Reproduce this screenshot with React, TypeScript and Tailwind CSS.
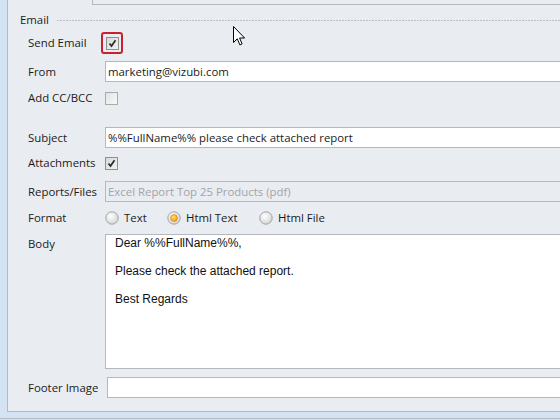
import React from 'react';

const Check = ({ checked }: { checked?: boolean }) => (
  <span
    className={
      checked
        ? 'w-[13px] h-[13px] border border-[#8e8f91] bg-linear-to-br from-[#d9d9d9] to-[#f2f2f2] flex items-center justify-center'
        : 'w-[13px] h-[13px] border border-[#a9abae] bg-linear-to-br from-[#e2e2e2] to-[#fafafa] flex items-center justify-center'
    }
  >
    {checked && (
      <svg width="11" height="11" viewBox="0 0 11 11">
        <path d="M2.5 5.5 L4.5 8 L8.5 2.2" fill="none" stroke="#2b2b2b" strokeWidth="1.7" />
      </svg>
    )}
  </span>
);

const Radio = ({ selected, label }: { selected?: boolean; label: string }) => (
  <span className="flex items-center gap-[5px]">
    <svg width="14" height="14" viewBox="0 0 14 14">
      <defs>
        <radialGradient id="rgray" cx="0.4" cy="0.35" r="0.75">
          <stop offset="0" stopColor="#ffffff" />
          <stop offset="1" stopColor="#cfcfcf" />
        </radialGradient>
        <radialGradient id="rorange" cx="0.4" cy="0.35" r="0.7">
          <stop offset="0" stopColor="#ffe27a" />
          <stop offset="1" stopColor="#f29a10" />
        </radialGradient>
      </defs>
      <circle cx="7" cy="7" r="6.2" fill="url(#rgray)" stroke="#9c9c9c" strokeWidth="0.9" />
      {selected && <circle cx="7" cy="7" r="3.4" fill="url(#rorange)" stroke="#e08400" strokeWidth="0.7" />}
    </svg>
    <span>{label}</span>
  </span>
);

const Row = ({
  label,
  className,
  top,
  children,
}: {
  label: string;
  className: string;
  top?: boolean;
  children: React.ReactNode;
}) => (
  <div className={`flex pl-[20px] ${top ? 'items-start' : 'items-center'} ${className}`}>
    <span className={`w-[77px] shrink-0 ${top ? 'pt-[2px]' : ''}`}>{label}</span>
    {children}
  </div>
);

const field = 'flex-1 h-full border border-[#b5b8be] flex items-center pl-[2px]';

const App = () => {
  return (
    <div className="w-[560px] h-[420px] overflow-hidden bg-[#d4e3f3] flex flex-col font-['Segoe_UI','Open_Sans',sans-serif] text-[11.4px] leading-[16px] text-[#1b1b1b]">
      <div className="relative ml-[7px] w-[660px] h-[412px] shrink-0 border-l border-b border-[#b3b8c1] bg-[#e9ecf1]">
        <div className="ml-[84px] h-[5px] border-l border-b border-[#b3b8c1]" />

        <div className="mt-[7px] ml-[12px] h-[16px] flex items-center">
          <span>Email</span>
          <div className="ml-[8px] flex-1 h-px bg-[repeating-linear-gradient(90deg,#b9bdc5_0_2px,transparent_2px_3px)]" />
        </div>

        <Row label="Send Email" className="mt-[4px] h-[22px]">
          <span className="-ml-[4px] w-[22px] h-[22px] border-2 border-[#c8232d] rounded-[3px] flex items-center justify-center">
            <Check checked />
          </span>
        </Row>

        <Row label="From" className="mt-[7px] h-[21px]">
          <div className={`${field} bg-white`}>marketing@vizubi.com</div>
        </Row>

        <Row label="Add CC/BCC" className="mt-[6px] h-[20px]">
          <Check />
        </Row>

        <Row label="Subject" className="mt-[19px] h-[21px]">
          <div className={`${field} bg-white`}>%%FullName%% please check attached report</div>
        </Row>

        <Row label="Attachments" className="mt-[5px] h-[20px]">
          <Check checked />
        </Row>

        <Row label="Reports/Files" className="mt-[8px] h-[21px]">
          <div className={`${field} text-[#a3a5a9]`}>Excel Report Top 25 Products (pdf)</div>
        </Row>

        <Row label="Format" className="mt-[7px] h-[18px]">
          <div className="flex items-center">
            <span className="w-[62px]">
              <Radio label="Text" />
            </span>
            <span className="w-[92px]">
              <Radio selected label="Html Text" />
            </span>
            <Radio label="Html File" />
          </div>
        </Row>

        <Row label="Body" top className="mt-[7px] h-[135px]">
          <div className="flex-1 h-full border border-[#b5b8be] bg-white pl-[9px] pt-px font-['Liberation_Sans',Arial,sans-serif] text-[12px] leading-[14px] text-[#111]">
            <div>Dear %%FullName%%,</div>
            <div className="h-[14px]" />
            <div>Please check the attached report.</div>
            <div className="h-[14px]" />
            <div>Best Regards</div>
          </div>
        </Row>

        <Row label="Footer Image" className="mt-[8px] h-[21px]">
          <div className={`${field} ml-[2px] bg-white`} />
        </Row>

        <svg className="absolute left-[225px] top-[26px]" width="13" height="20" viewBox="0 0 13 20">
          <path
            d="M0.5 0.5 L0.5 16.5 L4.3 12.8 L6.9 18.9 L9.1 17.9 L6.6 12 L11.6 12 Z"
            fill="#ffffff"
            stroke="#000000"
            strokeWidth="1"
            strokeLinejoin="round"
          />
        </svg>
      </div>
      <div className="h-[6px] shrink-0" />
      <div className="h-px shrink-0 bg-[#b3b8c1]" />
    </div>
  );
};

export default App;
